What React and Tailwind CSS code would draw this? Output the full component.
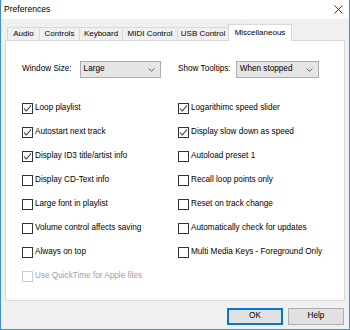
const left = [
  {label: "Loop playlist", checked: true},
  {label: "Autostart next track", checked: true},
  {label: "Display ID3 title/artist info", checked: true},
  {label: "Display CD-Text info"},
  {label: "Large font in playlist"},
  {label: "Volume control affects saving"},
  {label: "Always on top"},
  {label: "Use QuickTime for Apple files", disabled: true},
]

const right = [
  {label: "Logarithimc speed slider", checked: true},
  {label: "Display slow down as speed", checked: true},
  {label: "Autoload preset 1"},
  {label: "Recall loop points only"},
  {label: "Reset on track change"},
  {label: "Automatically check for updates"},
  {label: "Multi Media Keys - Foreground Only"},
  null,
]

const tabs = [
  {name: "Audio", w: "w-[32px]"},
  {name: "Controls", w: "w-[40px]"},
  {name: "Keyboard", w: "w-[43px]"},
  {name: "MIDI Control", w: "w-[55px]"},
  {name: "USB Control", w: "w-[51px]"},
]

function CheckRow({item}) {
  if (!item) return <div className="h-[24px]" />
  return (
    <div className="h-[24px] flex items-center gap-[2px]">
      <span className={`w-[11px] h-[11px] border bg-white flex items-center justify-center ${item.disabled ? "border-[#cccccc]" : "border-[#333333]"}`}>
        {item.checked && (
          <svg width="9" height="9" viewBox="0 0 9 9">
            <polyline points="1,4.5 3.3,7 8,1.5" fill="none" stroke="#333" strokeWidth="1.1" />
          </svg>
        )}
      </span>
      <span className={item.disabled ? "text-[#a0a0a0]" : "text-black"}>{item.label}</span>
    </div>
  )
}

function Combo({value, w}) {
  return (
    <div className={`h-[17px] ${w} bg-[#e5e5e5] border border-[#acacac] flex items-center justify-between pl-[3px] pr-[5px]`}>
      <span>{value}</span>
      <svg width="7" height="4" viewBox="0 0 7 4">
        <polyline points="0.5,0.5 3.5,3.3 6.5,0.5" fill="none" stroke="#555" strokeWidth="0.9" />
      </svg>
    </div>
  )
}

export default function App() {
  return (
    <div className="w-[350px] h-[330px] flex flex-col bg-[#f0f0f0] border-x border-b border-[#3d8ee0] font-['Liberation_Sans',Arial,sans-serif] text-[8.2px] text-black overflow-hidden">
      <div className="h-[19px] shrink-0 bg-white flex items-center justify-between pl-[3px] pr-[6px]">
        <span className="text-[8.6px]">Preferences</span>
        <svg width="9" height="9" viewBox="0 0 9 9">
          <path d="M0.5 0.5 L8.5 8.5 M8.5 0.5 L0.5 8.5" stroke="#222" strokeWidth="0.9" />
        </svg>
      </div>

      <div className="h-[21px] shrink-0 mx-[4px] pl-[2px] flex items-end">
        {tabs.map((t) => (
          <div key={t.name} className={`${t.w} h-[13px] border-t border-l border-[#d9d9d9] bg-[#f0f0f0] flex items-center justify-center text-[8px]`}>
            {t.name}
          </div>
        ))}
        <div className="w-[64px] h-[17px] -mb-px relative z-10 border-t border-x border-[#d9d9d9] bg-white flex items-start justify-center pt-[2px] text-[8px]">
          Miscellaneous
        </div>
      </div>

      <div className="h-[261px] shrink-0 mx-[4px] border border-[#d9d9d9] bg-white pl-[16px]">
        <div className="mt-[20px] h-[17px] grid grid-cols-[156px_1fr]">
          <div className="flex items-center gap-[8px]">
            <span>Window Size:</span>
            <Combo value="Large" w="w-[81px]" />
          </div>
          <div className="flex items-center gap-[5px]">
            <span>Show Tooltips:</span>
            <Combo value="When stopped" w="w-[83px]" />
          </div>
        </div>
        <div className="mt-[18px] grid grid-cols-[156px_1fr]">
          <div className="flex flex-col">
            {left.map((it) => <CheckRow key={it.label} item={it} />)}
          </div>
          <div className="flex flex-col">
            {right.map((it, i) => <CheckRow key={i} item={it} />)}
          </div>
        </div>
      </div>

      <div className="mt-[7px] mr-[5px] flex justify-end gap-[5px]">
        <button className="w-[56px] h-[17px] bg-[#e1e1e1] border border-[#0078d7] shadow-[inset_0_0_0_1px_#0078d7]">OK</button>
        <button className="w-[56px] h-[17px] bg-[#e1e1e1] border border-[#adadad]">Help</button>
      </div>
    </div>
  )
}
